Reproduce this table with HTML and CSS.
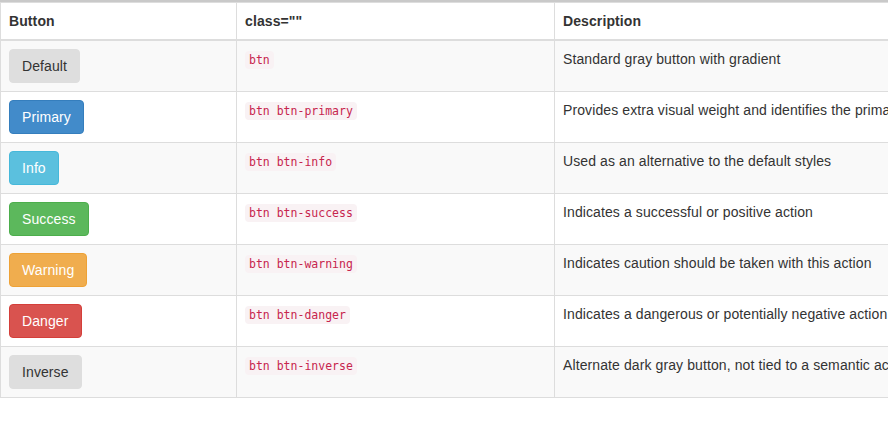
FILE: index.html
```html
<!DOCTYPE html>
<html>
<head>
<meta charset="utf-8">
<link rel="stylesheet" href="styles.css">
</head>
<body>
<div class="page">
  <div class="topbar"></div>
  <table class="tbl">
    <colgroup>
      <col class="c1"><col class="c2"><col class="c3">
    </colgroup>
    <thead>
      <tr><th>Button</th><th>class=""</th><th>Description</th></tr>
    </thead>
    <tbody>
      <tr><td><span class="btn btn-default">Default</span></td><td><code>btn</code></td><td>Standard gray button with gradient</td></tr>
      <tr><td><span class="btn btn-primary">Primary</span></td><td><code>btn btn-primary</code></td><td>Provides extra visual weight and identifies the primary action in a set of buttons</td></tr>
      <tr><td><span class="btn btn-info">Info</span></td><td><code>btn btn-info</code></td><td>Used as an alternative to the default styles</td></tr>
      <tr><td><span class="btn btn-success">Success</span></td><td><code>btn btn-success</code></td><td>Indicates a successful or positive action</td></tr>
      <tr><td><span class="btn btn-warning">Warning</span></td><td><code>btn btn-warning</code></td><td>Indicates caution should be taken with this action</td></tr>
      <tr><td><span class="btn btn-danger">Danger</span></td><td><code>btn btn-danger</code></td><td>Indicates a dangerous or potentially negative action</td></tr>
      <tr><td><span class="btn btn-default">Inverse</span></td><td><code>btn btn-inverse</code></td><td>Alternate dark gray button, not tied to a semantic action or use</td></tr>
    </tbody>
  </table>
</div>
</body>
</html>
```
FILE: styles.css
```css
html, body {
  margin: 0;
  padding: 0;
  background: #fff;
  overflow: hidden;
}
.page {
  width: 888px;
  overflow: hidden;
  font-family: "Liberation Sans", Arial, sans-serif;
  font-size: 14px;
  line-height: 20px;
  color: #333;
  letter-spacing: 0.1px;
}
.topbar {
  height: 2px;
  background: #c9c9c9;
}
.tbl {
  border-collapse: collapse;
  table-layout: fixed;
  width: 1200px;
  border: 1px solid #ddd;
}
.c1 { width: 236px; }
.c2 { width: 318px; }
.c3 { width: 646px; }
.tbl th, .tbl td {
  border: 1px solid #ddd;
  padding: 8px;
  text-align: left;
  vertical-align: top;
  white-space: nowrap;
}
.tbl th {
  font-weight: bold;
  border-bottom-width: 2px;
}
.tbl tbody tr:nth-child(odd) td {
  background: #f9f9f9;
}
code {
  font-family: "DejaVu Sans Mono", monospace;
  font-size: 11.5px;
  letter-spacing: 0;
  padding: 2px 4px;
  color: #c7254e;
  background: #f9f2f4;
  border-radius: 4px;
}
.btn {
  display: inline-block;
  padding: 6px 12px;
  border: 1px solid transparent;
  border-radius: 4px;
  font-size: 14px;
  line-height: 20px;
  vertical-align: top;
}
.btn-default { background: #dedede; border-color: #dedede; color: #333; }
.btn-primary { background: #428bca; border-color: #357ebd; color: #fff; }
.btn-info { background: #5bc0de; border-color: #46b8da; color: #fff; }
.btn-success { background: #5cb85c; border-color: #4cae4c; color: #fff; }
.btn-warning { background: #f0ad4e; border-color: #eea236; color: #fff; }
.btn-danger { background: #d9534f; border-color: #d43f3a; color: #fff; }
```
